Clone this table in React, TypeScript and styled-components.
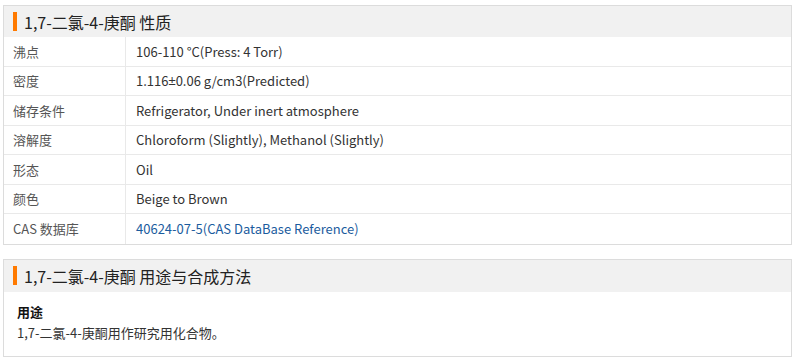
import React from "react";
import styled, { createGlobalStyle } from "styled-components";

const Global = createGlobalStyle`
  html, body { margin: 0; padding: 0; background: #fff; }
  body { font-family: "Microsoft YaHei", "Noto Sans CJK SC", "Noto Sans", sans-serif; color: #333; }
`;

const Page = styled.div`
  padding: 5px 2px 0 3px;
  display: flex;
  flex-direction: column;
  gap: 14px;
`;

const Box = styled.section`
  border: 1px solid #dcdcdc;
  background: #fff;
`;

const Header = styled.div<{ $h: number }>`
  height: ${(p) => p.$h}px;
  background: #f1f1f1;
  display: flex;
  align-items: center;
  padding-left: 9px;
  gap: 7px;
`;

const Bar = styled.span`
  width: 4px;
  height: 19px;
  background: #ff7a00;
`;

const Title = styled.h2`
  margin: 0;
  font-size: 16px;
  font-weight: normal;
  color: #222;
  line-height: 1;
`;

const Row = styled.div<{ $last?: boolean }>`
  display: grid;
  grid-template-columns: 122px 1fr;
  height: 29.5px;
  box-sizing: border-box;
  border-bottom: ${(p) => (p.$last ? "none" : "1px solid #e9e9e9")};
  font-size: 13px;
`;

const Label = styled.div`
  display: flex;
  align-items: center;
  padding-left: 9px;
  color: #555;
  border-right: 1px solid #e9e9e9;
`;

const Value = styled.div`
  display: flex;
  align-items: center;
  padding-left: 10px;
  color: #333;
  white-space: pre;
`;

const Sym = styled.span`
  font-family: "Liberation Sans", sans-serif;
`;

const Link = styled.a`
  color: #1b5c9e;
  text-decoration: none;
`;

const Body = styled.div`
  height: 64px;
  padding: 11px 13px 0;
  box-sizing: border-box;
  font-size: 13px;
`;

const SubTitle = styled.div`
  font-weight: bold;
  color: #111;
  line-height: 18px;
`;

const Text = styled.div`
  color: #333;
  line-height: 24px;
`;

const rows: [string, React.ReactNode][] = [
  ["沸点", "106-110 °C(Press: 4 Torr)"],
  ["密度", <>1.116<Sym>±</Sym>0.06 g/cm3(Predicted)</>],
  ["储存条件", "Refrigerator, Under inert atmosphere"],
  ["溶解度", "Chloroform (Slightly), Methanol (Slightly)"],
  ["形态", "Oil"],
  ["颜色", "Beige to Brown"],
  ["CAS 数据库", <Link href="#">40624-07-5(CAS DataBase Reference)</Link>],
];

export default function App() {
  return (
    <>
      <Global />
      <Page>
        <Box>
          <Header $h={31}>
            <Bar />
            <Title>1,7-二氯-4-庚酮 性质</Title>
          </Header>
          {rows.map(([k, v], i) => (
            <Row key={k} $last={i === rows.length - 1}>
              <Label>{k}</Label>
              <Value>{v}</Value>
            </Row>
          ))}
        </Box>
        <Box>
          <Header $h={32}>
            <Bar />
            <Title>1,7-二氯-4-庚酮 用途与合成方法</Title>
          </Header>
          <Body>
            <SubTitle>用途</SubTitle>
            <Text>1,7-二氯-4-庚酮用作研究用化合物。</Text>
          </Body>
        </Box>
      </Page>
    </>
  );
}
